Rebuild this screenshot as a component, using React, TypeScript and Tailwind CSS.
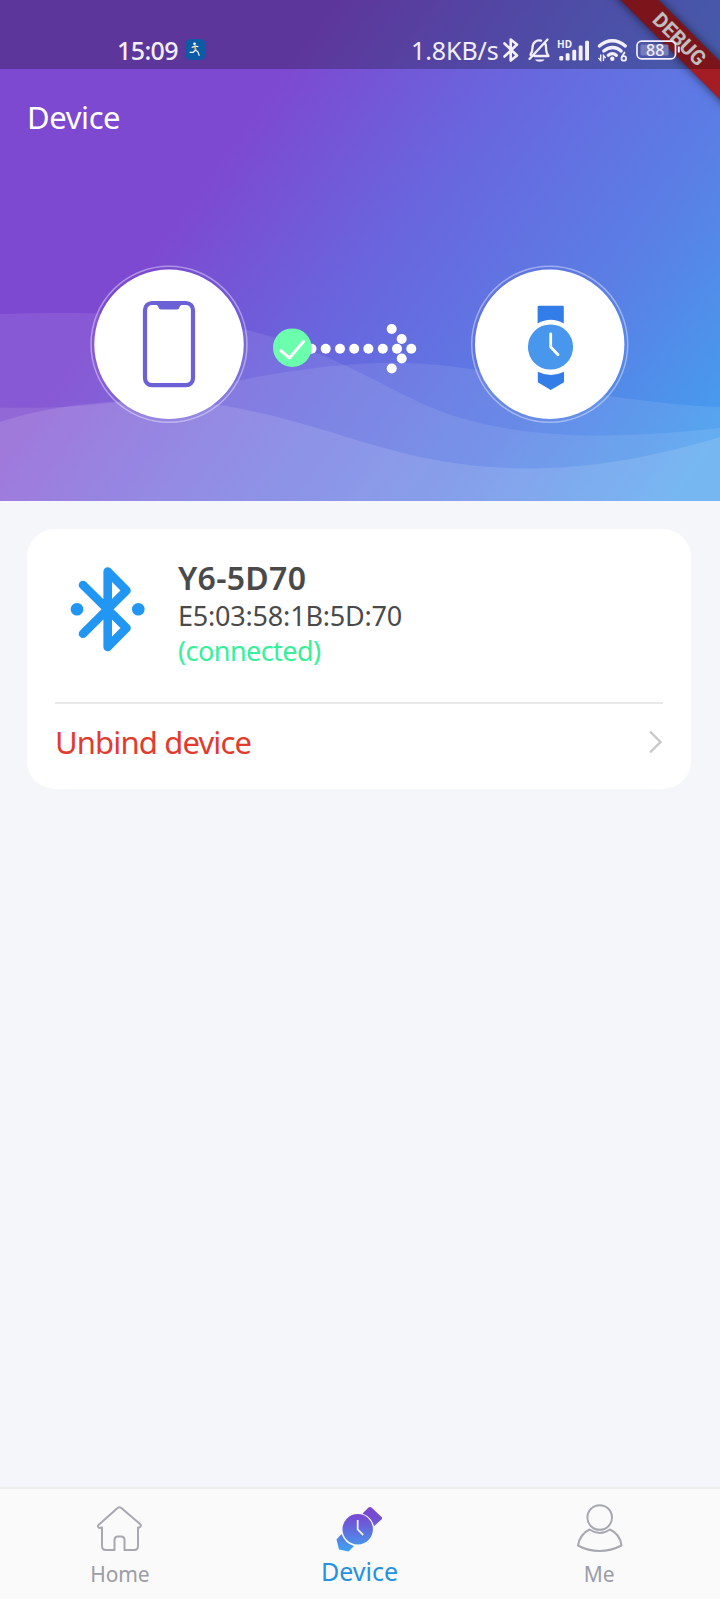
import React from "react";

function StatusIcons() {
  return (
    <svg className="h-[69px] w-[232px] shrink-0" viewBox="488 0 232 69" fill="none" stroke="#f3effb">
      <path d="M504.5 43.500 517 55.500 510.700 60.500V39.500L517 44.500 504.500 56.500" strokeWidth="2.600" strokeLinecap="round" strokeLinejoin="round" />
      <path d="M534.500 56H548.500c-2.500-3-2.500-5-2.500-9 0-1.500-.4-2.800-1-4M541 40.700c-4.500-1.500-8.500 2-8.500 7 0 3-.5 4.500-2 7M529.500 59 547.500 39.500" strokeWidth="2.300" strokeLinecap="round" strokeLinejoin="round" />
      <path d="M535 59.500h9.500c-1.500 3-8 3-9.500 0z" fill="#f3effb" stroke="none" />
      <g fill="#f3effb" stroke="none">
        <rect x="559.300" y="56" width="3.900" height="4.500" rx="1.300" />
        <rect x="565.700" y="53.300" width="3.900" height="7.200" rx="1.300" />
        <rect x="572.300" y="49.800" width="3.900" height="10.700" rx="1.300" />
        <rect x="578.700" y="45.500" width="3.900" height="15" rx="1.300" />
        <rect x="585.100" y="40.800" width="3.900" height="19.700" rx="1.300" />
      </g>
      <g strokeWidth="3.300" strokeLinecap="round">
        <path d="M599.300 46c8-7 18-7 26 0M603.800 51c5.500-4.700 12.300-4.700 17.300 0M608.300 55.300c2.700-2.200 5.500-2.200 8 0" />
      </g>
      <circle cx="612.300" cy="58.800" r="2.200" fill="#f3effb" stroke="none" />
      <path d="M600.700 54.500v6l-2.200-2.500M603.500 61v-5.500l2.200 2.500" strokeWidth="1.400" />
      <path d="M624.500 52.500l-2.700 4.500" strokeWidth="1.800" strokeLinecap="round" />
      <circle cx="623.800" cy="58.400" r="2.300" strokeWidth="1.800" />
      <rect x="637" y="41.200" width="38.500" height="17.600" rx="4.500" strokeWidth="1.700" />
      <rect x="640.500" y="44.500" width="28" height="11" rx="1.500" fill="#777cb8" stroke="none" />
      <path d="M678.800 46.500v6" strokeWidth="2" />
    </svg>
  );
}

function Waves() {
  return (
    <svg className="absolute inset-0 h-full w-full" viewBox="0 0 720 501" fill="#fff">
      <path fillOpacity=".09" d="M0 314C90 311 180 314 247 330C330 349 390 392 440 411C520 441 620 439 720 428V501H0z" />
      <path fillOpacity=".09" d="M0 407.500C90 410 160 398 241 380C300 368 370 360 420 363.500C500 369 560 388 610 396C650 402 690 406 720 407V501H0z" />
      <path fillOpacity=".12" d="M0 422C60 401 150 396 220 405C300 418 370 448 430 459C530 478 620 467 720 437V501H0z" />
    </svg>
  );
}

function PhoneBadge() {
  return (
    <svg className="size-[158px] overflow-visible" viewBox="90 265.500 158 158">
      <circle cx="169" cy="343.800" r="78" fill="none" stroke="#fff" strokeOpacity=".4" strokeWidth="1.500" />
      <circle cx="169" cy="343.800" r="74.700" fill="#fff" />
      <rect x="145" y="302.500" width="48" height="82.200" rx="7" fill="none" stroke="#6b60d6" strokeWidth="4.200" />
      <path d="M157 303h24v2c-2 0-1 4-4 4h-16c-3 0-2-4-4-4z" fill="#6b60d6" />
    </svg>
  );
}

function WatchBadge() {
  return (
    <svg className="size-[158px] overflow-visible" viewBox="471 265.500 158 158">
      <circle cx="549.700" cy="343.800" r="78" fill="none" stroke="#fff" strokeOpacity=".4" strokeWidth="1.500" />
      <circle cx="549.700" cy="343.800" r="74.700" fill="#fff" />
      <path d="M538.800 305.300h23.800q1.200 0 1.200 1.200V323q-13-7.500-26.200 0v-16.500q0-1.200 1.200-1.200zM537.800 371.300q13 6.500 26.200 0v10.400L550.700 389.500 537.800 381.700z" fill="#327de8" />
      <circle cx="550.500" cy="346.500" r="22.600" fill="#4897ec" />
      <path d="M550.700 333.300V346.500L558 354.300" fill="none" stroke="#fff" strokeWidth="2.800" strokeLinecap="round" strokeLinejoin="round" />
    </svg>
  );
}

const dots = [
  [311.500, 348.700], [325.700, 348.700], [340, 348.700], [354.200, 348.700], [368.400, 348.700], [382.800, 348.700],
  [397, 348.700], [411.300, 348.700], [391.700, 329], [401.700, 339], [401.700, 358.500], [391.700, 368.500],
];

function LinkArrow() {
  return (
    <svg className="h-[58px] w-[146px]" viewBox="272 320 146 58">
      {dots.map(([x, y]) => <circle key={x + "-" + y} cx={x} cy={y} r="5" fill="#fff" />)}
      <circle cx="292.300" cy="347.700" r="19.300" fill="#6bfead" />
      <path d="M280.500 350.500l9 7.500L303.500 341.500" fill="none" stroke="#fff" strokeWidth="3" strokeLinecap="round" strokeLinejoin="round" />
    </svg>
  );
}

function Header() {
  return (
    <header className="relative h-[501px] shrink-0 overflow-hidden bg-[linear-gradient(126deg,#7d49d0_0%,#7d49d0_31%,#6a64dd_51%,#5a7fe5_76%,#459eef_96%)]">
      <Waves />
      <div className="absolute right-[-64px] top-[26px] flex h-[27px] w-[210px] rotate-45 items-center justify-center bg-[#a51d24] shadow-[0_0_10px_rgba(0,0,0,0.6)]">
        <span className="font-['Roboto',sans-serif] text-[20.5px] font-bold leading-none text-white">DEBUG</span>
      </div>
      <div className="relative flex h-[69px] items-start bg-black/25 text-[#f3effb]">
        <span className="ml-[117px] mt-[34px] w-[68px] text-[25px] font-medium leading-[32px] tracking-[-0.6px]">15:09</span>
        <svg className="mt-[39px] size-[21px]" viewBox="0 0 22 22">
          <rect width="22" height="22" rx="6" fill="#0d5ba5" />
          <circle cx="10" cy="5" r="1.400" fill="#fff" />
          <path d="M10.500 7l.8 5 2.200 1.500 1.500 4M11 11.500L8.500 14H4.800M7 9l3.500-1.500L14 8" fill="none" stroke="#fff" strokeWidth="1.200" />
          <path d="M10.500 8l.6 3.500" stroke="#f2b23c" strokeWidth="1.800" />
        </svg>
        <span className="ml-auto mt-[34px] w-[77px] whitespace-nowrap text-[25px] leading-[32px] tracking-[-0.1px]">1.8KB/s</span>
        <StatusIcons />
        <span className="absolute left-[557px] top-[38px] text-[10px] font-bold leading-[12px]">HD</span>
        <span className="absolute left-[646px] top-[41px] text-[16px] font-medium leading-[18px]">88</span>
      </div>
      <h1 className="relative ml-[27px] mt-[28px] text-[31px] leading-[40px] tracking-[-0.4px] text-white">Device</h1>
      <div className="relative ml-[90px] mt-[128.500px] flex items-center">
        <PhoneBadge />
        <div className="ml-[24px] mt-[9px]"><LinkArrow /></div>
        <div className="ml-[53px]"><WatchBadge /></div>
      </div>
    </header>
  );
}

function DeviceCard() {
  return (
    <section className="ml-[27px] mr-[29px] mt-[28px] h-[260px] rounded-[28px] bg-white px-[28px]">
      <div className="flex h-[173px]">
        <svg className="ml-[15px] mt-[36px] h-[88px] w-[76px]" viewBox="70 565 76 88">
          <path d="M83 585 126.500 628 107.700 647V571.500L126.500 590.500 83 633.700" fill="none" stroke="#2196f3" strokeWidth="8.600" strokeLinecap="round" strokeLinejoin="round" />
          <circle cx="77" cy="609.300" r="6.300" fill="#2196f3" />
          <circle cx="138.300" cy="609.300" r="6.300" fill="#2196f3" />
        </svg>
        <div className="ml-[32px] pt-[28px] text-[#4a4a4a]">
          <div className="text-[32px] font-semibold leading-[41px] tracking-[0.3px]">Y6-5D70</div>
          <div className="text-[27px] leading-[36px] tracking-[-0.2px]">E5:03:58:1B:5D:70</div>
          <div className="text-[27px] leading-[34px] tracking-[-0.55px] text-[#37f09a]">(connected)</div>
        </div>
      </div>
      <div className="h-[2px] bg-[#e8e8e8]" />
      <div className="flex h-[76px] items-center justify-between text-[#e23b2e]">
        <span className="-mt-[1px] text-[31px] leading-[40px] tracking-[-0.85px]">Unbind device</span>
        <svg className="h-[24px] w-[16px]" viewBox="0 0 16 24" fill="none" stroke="#c8c8c8" strokeWidth="2.400">
          <path d="M3 1.500 13.500 12 3 22.500" />
        </svg>
      </div>
    </section>
  );
}

function TabBar() {
  return (
    <nav className="mt-auto grid h-[112px] shrink-0 grid-cols-3 border-t-2 border-[#ededee] bg-[#fafafa] pr-[1px] text-center text-[#9c9da6]">
      <div className="flex flex-col items-center">
        <svg className="mt-[16px] h-[48px] w-[46px]" viewBox="96.500 1505 46 48" fill="none" stroke="#a7a8b0" strokeWidth="2" strokeLinejoin="round">
          <path d="M101.500 1527.500V1546q0 4 4 4h8.500v-10q0-3.500 3.500-3.500h3q3.500 0 3.500 3.500v10h9.500q4 0 4-4v-18.500h1.500q2.500-1.500.5-3.500L121.500 1508.500q-2.500-2.500-5 0L98 1525q-1.500 2 1 3z" />
        </svg>
        <span className="mt-[6px] text-[21px] leading-[30px] tracking-[-0.2px]">Home</span>
      </div>
      <div className="flex flex-col items-center">
        <svg className="mt-[16px] h-[48px] w-[46px]" viewBox="336 1505 46 48">
          <defs>
            <linearGradient id="watch" gradientUnits="userSpaceOnUse" x1="0" y1="1508" x2="0" y2="1551">
              <stop offset="0" stopColor="#7c45cf" />
              <stop offset=".25" stopColor="#7350d4" />
              <stop offset=".8" stopColor="#4d8ce9" />
              <stop offset="1" stopColor="#3ca2f2" />
            </linearGradient>
          </defs>
          <path fill="url(#watch)" d="M362.500 1513.500l6-6q1.500-1 3 0l10.500 10v1.500l-8 7.200q-2-8.700-11.500-12.700zM341.500 1534q3.500 9.500 12.500 12l-5.500 5.500-9.500-2-2.500-10z" />
          <circle cx="357.700" cy="1529.300" r="15.200" fill="url(#watch)" />
          <path d="M357.700 1520v9.500l5.500 5.500" stroke="#f3efff" strokeWidth="1.800" fill="none" />
        </svg>
        <span className="mt-[2px] text-[25px] leading-[32px] text-[#2491e2]">Device</span>
      </div>
      <div className="flex flex-col items-center">
        <svg className="mt-[14px] h-[50px] w-[48px]" viewBox="575 1503 48 50" fill="none" stroke="#a7a8b0" strokeWidth="2">
          <circle cx="599.700" cy="1517.500" r="12.300" />
          <path d="M589.500 1529.500Q580 1534 578 1545.500Q588 1551 599.500 1551T621.500 1545.500Q620 1534 610 1529.500Q600 1536.500 589.500 1529.500z" strokeLinejoin="round" />
        </svg>
        <span className="mt-[6px] text-[21px] leading-[30px]">Me</span>
      </div>
    </nav>
  );
}

export default function App() {
  return (
    <main className="flex h-[1599px] w-[720px] flex-col overflow-hidden bg-[#f5f6f9] font-['Noto_Sans',sans-serif]">
      <Header />
      <DeviceCard />
      <TabBar />
    </main>
  );
}
